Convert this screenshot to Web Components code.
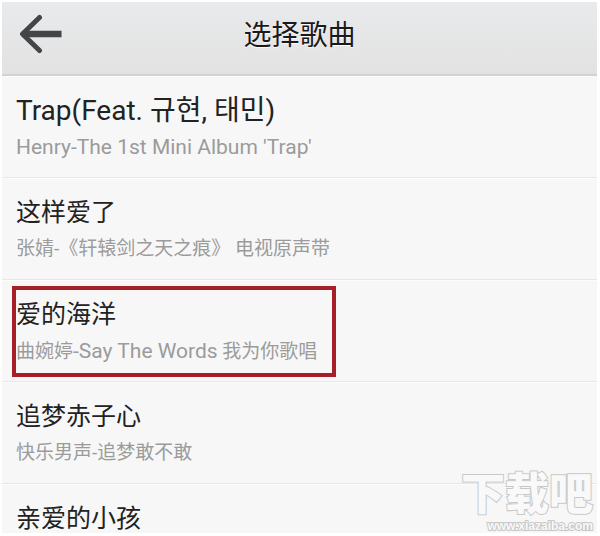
<!DOCTYPE html>
<html lang="zh-CN">
<head>
<meta charset="utf-8">
<meta name="viewport" content="width=device-width, initial-scale=1">
<title>选择歌曲</title>
<style>
  body {
    margin: 0;
    background: #fff;
    font-family: Roboto, "Noto Sans CJK SC", sans-serif;
  }
  .latin {
    font-size: 21px;
  }
  .latin-name {
    font-size: 28px;
  }
</style>
</head>
<body>
<song-picker>
  <title-bar slot="bar">选择歌曲</title-bar>
  <song-row>
    <span class="latin-name" lang="ko">Trap(Feat. 규현, 태민)</span>
    <span slot="album" class="latin">Henry-The 1st Mini Album 'Trap'</span>
  </song-row>
  <song-row>
    这样爱了
    <span slot="album">张婧-《轩辕剑之天之痕》 电视原声带</span>
  </song-row>
  <song-row marked>
    爱的海洋
    <span slot="album">曲婉婷<span class="latin">-Say The Words</span> 我为你歌唱</span>
  </song-row>
  <song-row>
    追梦赤子心
    <span slot="album">快乐男声-追梦敢不敢</span>
  </song-row>
  <song-row>亲爱的小孩</song-row>
  <site-mark slot="mark"></site-mark>
</song-picker>

<template id="song-picker">
  <style>
    :host {
      display: block;
      box-sizing: border-box;
      height: 100vh;
      padding: 2px 3px 3px 2px;
    }
    main {
      position: relative;
      height: 100%;
      overflow: hidden;
      background: #f7f7f7;
    }
  </style>
  <main>
    <slot name="bar"></slot>
    <div role="list"><slot></slot></div>
    <slot name="mark"></slot>
  </main>
</template>

<template id="title-bar">
  <style>
    :host {
      display: block;
    }
    header {
      display: grid;
      grid-template-columns: 72px 1fr 72px;
      align-items: center;
      height: 72px;
      border-bottom: 2px solid #d2d2d2;
      background: linear-gradient(#e9eaec, #e2e2e2);
    }
    button {
      display: flex;
      padding: 8px 12px 16px 16px;
      border: 0;
      background: none;
    }
    h1 {
      margin: 0;
      padding-bottom: 4px;
      color: #1a1a1a;
      font-size: 28px;
      font-weight: 400;
      line-height: 40px;
      text-align: center;
      text-shadow: 0 1px 1px #fff;
    }
  </style>
  <header>
    <button type="button" aria-label="返回">
      <svg width="44" height="40" viewBox="0 0 44 40" fill="none" stroke="#444546">
        <path d="M4 20H43.500" stroke-width="6.400"/>
        <path d="M21.500 3.500L4.500 20L21.500 36.500" stroke-width="5" stroke-linecap="round" stroke-linejoin="round"/>
      </svg>
    </button>
    <h1><slot></slot></h1>
  </header>
</template>

<template id="song-row">
  <style>
    :host {
      display: block;
      padding: 17px 14px 12px;
      border-bottom: 1px solid #e6e7e8;
      box-shadow: inset 0 1px #fcfcfc;
    }
    .song {
      position: relative;
      width: fit-content;
    }
    .name,
    .album {
      height: 36px;
      line-height: 36px;
      white-space: nowrap;
    }
    .name {
      color: #222;
      font-size: 25px;
    }
    .album {
      color: #9b9b9b;
      font-size: 19px;
    }
    :host([marked]) .song::after {
      content: "";
      position: absolute;
      inset: -11px -19px -8px -4px;
      border: 4px solid #a81e28;
    }
  </style>
  <div class="song">
    <div class="name"><slot></slot></div>
    <div class="album"><slot name="album"></slot></div>
  </div>
</template>

<template id="site-mark">
  <style>
    :host {
      position: absolute;
      right: 4px;
      bottom: 0;
      color: #f9f9f9;
      font-family: "Liberation Sans", "Noto Sans CJK SC", sans-serif;
      font-weight: 900;
      text-align: right;
      -webkit-text-stroke: 2px #c8c8c8;
      paint-order: stroke fill;
    }
    .name {
      font-size: 44px;
      line-height: 48px;
    }
    .url {
      font-size: 12px;
      line-height: 14px;
    }
  </style>
  <div class="name">下载吧</div>
  <div class="url">www.xiazaiba.com</div>
</template>

<script>
class TemplateElement extends HTMLElement {
  constructor () {
    super()

    const template = document.getElementById(this.localName)
    this.attachShadow({ mode: 'open' })
    this.shadowRoot.appendChild(template.content.cloneNode(true))
  }
}

class SongPicker extends TemplateElement {}

class TitleBar extends TemplateElement {}

class SongRow extends TemplateElement {
  connectedCallback () {
    this.setAttribute('role', 'listitem')
  }
}

class SiteMark extends TemplateElement {}

window.customElements.define('song-picker', SongPicker)
window.customElements.define('title-bar', TitleBar)
window.customElements.define('song-row', SongRow)
window.customElements.define('site-mark', SiteMark)
</script>
</body>
</html>
